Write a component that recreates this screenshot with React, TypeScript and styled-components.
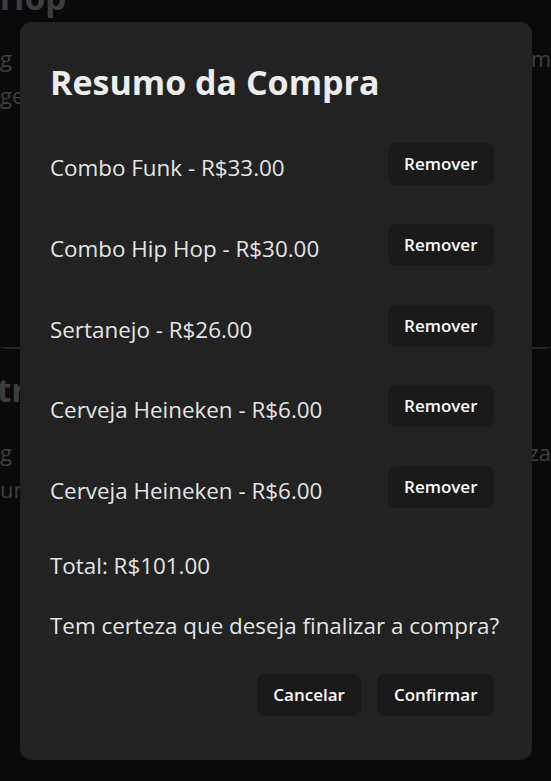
import styled, { createGlobalStyle } from "styled-components";

const GlobalStyle = createGlobalStyle`
  html, body {
    margin: 0;
    background: #242424;
    color: rgba(255, 255, 255, 0.87);
    font-family: "Open Sans", "Noto Sans", sans-serif;
  }
  * {
    box-sizing: border-box;
  }
`;

type ItemCompra = {
  id: number;
  nome: string;
  preco: number;
};

const itens: ItemCompra[] = [
  { id: 1, nome: "Combo Funk", preco: 33 },
  { id: 2, nome: "Combo Hip Hop", preco: 30 },
  { id: 3, nome: "Sertanejo", preco: 26 },
  { id: 4, nome: "Cerveja Heineken", preco: 6 },
  { id: 5, nome: "Cerveja Heineken", preco: 6 },
];

/* pagina de fundo (fica atras do modal) */
const Pagina = styled.main`
  height: 781px;
  overflow: hidden;
  display: flex;
  flex-direction: column;
`;

const Produto = styled.section<{ $divisor?: boolean }>`
  display: flex;
  flex-direction: column;
  border-bottom: ${({ $divisor }) => ($divisor ? "1px solid #8a8a8a" : "none")};
  box-shadow: ${({ $divisor }) => ($divisor ? "0 5px 0 -4px #8a8a8a" : "none")};
`;

const ProdutoTitulo = styled.h2<{ $recuo: number }>`
  margin: 0;
  text-indent: ${({ $recuo }) => $recuo}px;
  font-size: 33px;
  font-weight: 700;
  line-height: 40px;
  white-space: nowrap;
  overflow: hidden;
`;

const ProdutoTexto = styled.p`
  margin: 0;
  font-size: 22px;
  line-height: 37px;
  white-space: nowrap;
  display: flex;
  justify-content: space-between;
`;

const Overlay = styled.div`
  position: fixed;
  inset: 0;
  background: rgba(0, 0, 0, 0.72);
  display: flex;
  align-items: flex-start;
  justify-content: flex-start;
  padding: 22px 0 0 20px;
`;

const Modal = styled.div`
  width: 512px;
  background: #222222;
  border-radius: 12px;
  padding: 40px 30px 44px 30px;
  display: flex;
  flex-direction: column;
  color: rgba(255, 255, 255, 0.87);
`;

const Titulo = styled.h2`
  margin: 0 0 41px;
  font-size: 34px;
  line-height: 40px;
  font-weight: 700;
  color: #ececec;
`;

const Lista = styled.ul`
  list-style: none;
  margin: 0;
  padding: 0 8px 0 0;
  display: flex;
  flex-direction: column;
  gap: 38.75px;
`;

const Linha = styled.li`
  display: flex;
  justify-content: space-between;
  align-items: flex-start;
`;

const Texto = styled.p<{ $topo?: number }>`
  margin: ${({ $topo }) => $topo ?? 0}px 0 0;
  font-size: 22.4px;
  line-height: 30px;
  color: #e4e4e4;
  white-space: nowrap;
`;

const Botao = styled.button`
  border: none;
  border-radius: 8px;
  background: #1a1a1a;
  color: #fafafa;
  font-family: inherit;
  font-size: 17px;
  font-weight: 600;
  line-height: 24px;
  padding: 9px 16.5px;
  cursor: pointer;
`;

const Acoes = styled.div`
  display: flex;
  justify-content: flex-end;
  gap: 16px;
  margin-top: 33px;
  padding-right: 8px;
`;

const formatar = (v: number) => `R$${v.toFixed(2)}`;

export default function App() {
  const total = itens.reduce((s, i) => s + i.preco, 0);

  return (
    <>
      <GlobalStyle />
      <Pagina>
        <Produto $divisor style={{ marginTop: -22, height: 370 }}>
          <ProdutoTitulo $recuo={-189}>Combo Hip Hop</ProdutoTitulo>
          <div style={{ height: 22 }} />
          <ProdutoTexto>
            <span>g</span>
            <span>m</span>
          </ProdutoTexto>
          <ProdutoTexto>
            <span>ge</span>
          </ProdutoTexto>
        </Produto>
        <Produto style={{ paddingTop: 22 }}>
          <ProdutoTitulo $recuo={-3}>tr</ProdutoTitulo>
          <div style={{ height: 24 }} />
          <ProdutoTexto>
            <span>g</span>
            <span>iza</span>
          </ProdutoTexto>
          <ProdutoTexto>
            <span>um</span>
          </ProdutoTexto>
        </Produto>
      </Pagina>

      <Overlay>
        <Modal>
          <Titulo>Resumo da Compra</Titulo>
          <Lista>
            {itens.map((item) => (
              <Linha key={item.id}>
                <Texto $topo={10}>
                  {item.nome} - {formatar(item.preco)}
                </Texto>
                <Botao>Remover</Botao>
              </Linha>
            ))}
          </Lista>
          <Texto $topo={43}>Total: {formatar(total)}</Texto>
          <Texto $topo={30}>Tem certeza que deseja finalizar a compra?</Texto>
          <Acoes>
            <Botao>Cancelar</Botao>
            <Botao>Confirmar</Botao>
          </Acoes>
        </Modal>
      </Overlay>
    </>
  );
}
